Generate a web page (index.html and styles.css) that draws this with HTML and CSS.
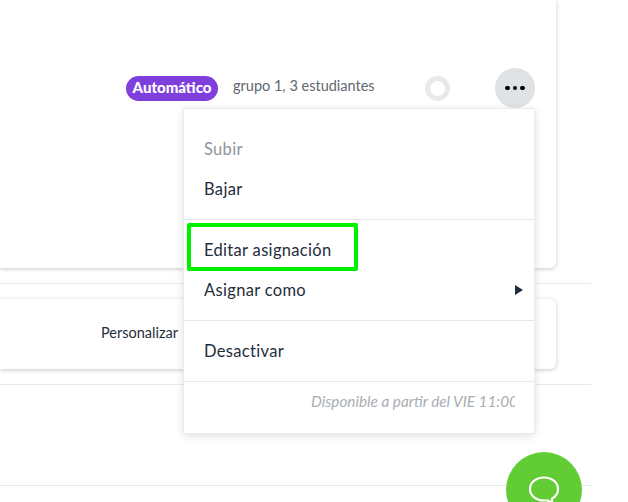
FILE: index.html
```html
<!DOCTYPE html>
<html lang="es">
<head>
  <meta charset="UTF-8">
  <title>Asignaciones</title>
  <link rel="stylesheet" href="styles.css">
</head>
<body>
  <div class="list">
    <!-- First assignment -->
    <section class="item">
      <div class="card card-main">
        <span class="pill">Automático</span>
        <span class="group">grupo 1, 3 estudiantes</span>
        <span class="spinner"></span>
        <button class="more" aria-label="Más opciones">
          <i></i><i></i><i></i>
        </button>
      </div>
    </section>

    <!-- Second assignment -->
    <section class="item">
      <div class="card card-small">
        <span class="custom">Personalizar</span>
      </div>
    </section>

    <section class="item item-empty"></section>
  </div>

  <!-- Dropdown menu -->
  <div class="menu">
    <div class="menu-group">
      <div class="menu-item disabled">Subir</div>
      <div class="menu-item">Bajar</div>
    </div>
    <div class="menu-group">
      <div class="menu-item">Editar asignación</div>
      <div class="menu-item">Asignar como <span class="arrow"></span></div>
    </div>
    <div class="menu-group">
      <div class="menu-item">Desactivar</div>
    </div>
    <div class="menu-note"><span>Disponible a partir del VIE 11:00</span></div>
  </div>

  <!-- Highlight drawn over the menu -->
  <div class="highlight"></div>

  <!-- Chat button -->
  <button class="chat" aria-label="Chat">
    <svg width="32" height="28" viewBox="0 0 32 28" fill="none" stroke="#fff" stroke-width="2.2" stroke-linejoin="round">
      <path d="M16 1.500C8.500 1.500 2 6 2 13C2 20 8.500 24.500 16 24.500L20 24.500L24 27L24 22.500C28 20.500 30 17 30 13C30 6 23.500 1.500 16 1.500Z"/>
    </svg>
  </button>
</body>
</html>
```

FILE: styles.css
```css
* {box-sizing: border-box; margin: 0; padding: 0;}
html, body {height: 100%; overflow: hidden;}
body {
  font-family: "Lato", "Open Sans", Arial, sans-serif;
  background: #fff;
  color: #1f2d3d;
}

/* Assignment list */
.list {width: 591px;}
.item {
  border-bottom: 1px solid #e6e9ec;
  padding: 15px 35px 15px 0;
}
.item:first-child {padding-top: 0;}
.item-empty {height: 101px;}

.card {
  background: #fff;
  border-radius: 0 0 6px 0;
  box-shadow: 0 1px 4px rgba(0, 0, 0, .22);
  display: flex;
  align-items: center;
}
.card-main {
  height: 268px;
  padding: 68px 21px 0 126px;
  align-items: flex-start;
}
.card-small {
  height: 70px;
  border-radius: 0 6px 6px 0;
  padding: 0 0 4px 101px;
}

.pill {
  background: #7f3fdc;
  color: #fff;
  font-size: 15px;
  font-weight: 900;
  line-height: 22px;
  height: 25px;
  width: 92px;
  text-align: center;
  border-radius: 13px;
  margin-top: 8px;
}
.group {
  color: #5f6770;
  font-size: 14.500px;
  line-height: 20px;
  margin: 8px 0 0 15px;
  width: 192px;
}
.spinner {
  width: 25px;
  height: 25px;
  border: 5px solid #e8e9e9;
  border-radius: 50%;
  margin-top: 8px;
}
.more {
  width: 40px;
  height: 40px;
  border: none;
  border-radius: 50%;
  background: #e0e3e6;
  margin-left: auto;
  display: flex;
  align-items: center;
  justify-content: center;
  gap: 3px;
}
.more i {width: 4.500px; height: 4.500px; border-radius: 50%; background: #000;}

.custom {font-size: 14.500px; color: #1f2d3d;}

/* Dropdown menu */
.menu {
  position: absolute;
  left: 183px;
  top: 108px;
  width: 352px;
  height: 326px;
  background: #fff;
  border: 1px solid #e9ebed;
  border-radius: 2px;
  box-shadow: 0 2px 8px rgba(0, 0, 0, .12);
}
.menu-group {
  padding: 10px 0;
  border-bottom: 1px solid #e6e9ec;
}
.menu-group:first-child {padding-top: 20px;}
.menu-item {
  height: 40px;
  padding: 0 11px 0 20px;
  display: flex;
  align-items: center;
  justify-content: space-between;
  font-size: 16.500px;
  letter-spacing: .32px;
  color: #1f2d3d;
}
.menu-item.disabled {color: #8f959b;}
.arrow {
  border-left: 8px solid #1f2d3d;
  border-top: 5px solid transparent;
  border-bottom: 5px solid transparent;
}
.menu-note {
  display: flex;
  justify-content: flex-end;
  padding: 9px 19px 0 0;
  font-size: 15.300px;
  font-style: italic;
  line-height: 20px;
  color: #a9adb3;
}
.menu-note span {width: 204px; overflow: hidden; white-space: nowrap;}

.highlight {
  position: absolute;
  left: 187px;
  top: 223px;
  width: 171px;
  height: 48px;
  border: 4px solid #00f000;
  border-radius: 2px;
}

/* Chat button */
.chat {
  position: absolute;
  left: 506px;
  top: 452px;
  width: 76px;
  height: 76px;
  border: none;
  border-radius: 50%;
  background: #62cc35;
  display: flex;
  justify-content: center;
  padding-top: 24px;
}
```
